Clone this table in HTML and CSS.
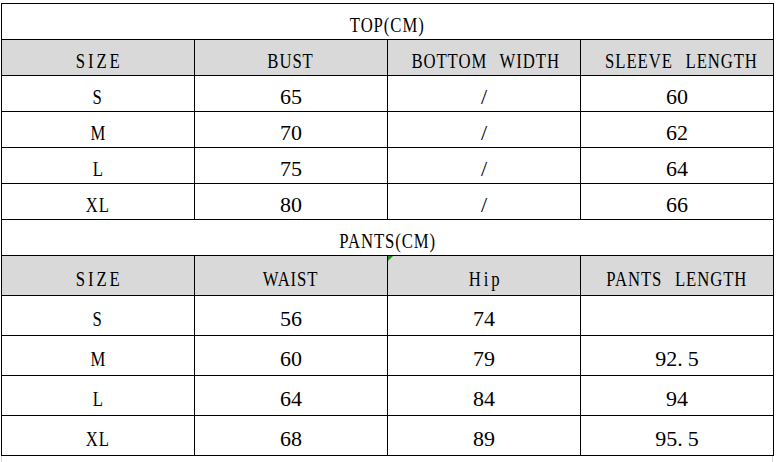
FILE: index.html
```html
<!DOCTYPE html>
<html>
<head>
<meta charset="utf-8">
<link rel="stylesheet" href="styles.css">
</head>
<body>
<div class="sheet">
<table class="size-table">
  <tr class="title"><td colspan="4"><span class="cond">TOP(CM)</span></td></tr>
  <tr class="head">
    <td><span class="cond wide">SIZE</span></td><td><span class="cond">BUST</span></td><td><span class="cond">BOTTOM WIDTH</span></td><td><span class="cond">SLEEVE LENGTH</span></td>
  </tr>
  <tr><td><span class="cond">S</span></td><td>65</td><td>/</td><td>60</td></tr>
  <tr><td><span class="cond">M</span></td><td>70</td><td>/</td><td>62</td></tr>
  <tr><td><span class="cond">L</span></td><td>75</td><td>/</td><td>64</td></tr>
  <tr><td><span class="cond">XL</span></td><td>80</td><td>/</td><td>66</td></tr>
  <tr class="title"><td colspan="4"><span class="cond">PANTS(CM)</span></td></tr>
  <tr class="head tall">
    <td><span class="cond wide">SIZE</span></td><td><span class="cond">WAIST</span></td><td class="flag"><span class="cond wide">Hip</span></td><td><span class="cond">PANTS LENGTH</span></td>
  </tr>
  <tr class="tall"><td><span class="cond">S</span></td><td>56</td><td>74</td><td></td></tr>
  <tr class="tall"><td><span class="cond">M</span></td><td>60</td><td>79</td><td>92<span class="dot">.</span>5</td></tr>
  <tr class="tall"><td><span class="cond">L</span></td><td>64</td><td>84</td><td>94</td></tr>
  <tr class="tall"><td><span class="cond">XL</span></td><td>68</td><td>89</td><td>95<span class="dot">.</span>5</td></tr>
</table>
<div class="below"></div>
</div>
</body>
</html>
```

FILE: styles.css
```css
html, body {
  margin: 0;
  padding: 0;
  background: #ffffff;
}

.sheet {
  padding: 3px 0 0 1px;
}

.size-table {
  width: 773px;
  table-layout: fixed;
  border-collapse: separate;
  border-spacing: 0;
  border-top: 1px solid #000;
  border-left: 1px solid #000;
  font-family: "Liberation Serif", "Times New Roman", serif;
  font-size: 22px;
  color: #000;
}

.size-table tr {
  height: 36px;
}

.size-table tr.tall {
  height: 40px;
}

.size-table td {
  border-right: 1px solid #000;
  border-bottom: 1px solid #000;
  padding: 6px 0 0 0;
  line-height: 24px;
  text-align: center;
  vertical-align: middle;
  white-space: nowrap;
}

.size-table tr.head td {
  background: #d9d9d9;
}

.cond {
  display: inline-block;
  transform: scaleX(0.76);
  letter-spacing: 1.2px;
  word-spacing: 10px;
}

.cond.wide {
  letter-spacing: 3.8px;
  text-indent: 3.8px;
}

.dot {
  margin-right: 5px;
}

.flag {
  position: relative;
}

.flag::before {
  content: "";
  position: absolute;
  left: 0;
  top: 0;
  width: 0;
  height: 0;
  border-top: 5px solid #1f8f1f;
  border-right: 5px solid transparent;
}

.below {
  width: 772px;
  height: 7px;
  border-left: 1px solid #d4d4d4;
  border-right: 1px solid #d4d4d4;
  box-sizing: border-box;
}
```
